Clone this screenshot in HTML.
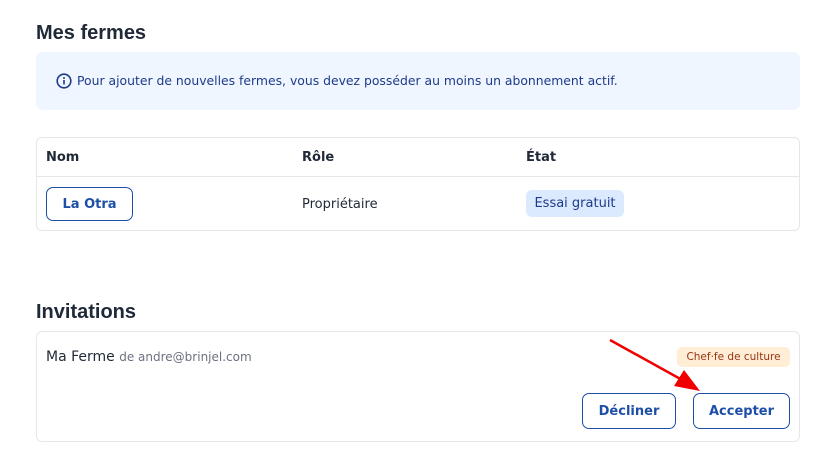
<!DOCTYPE html>
<html><head><meta charset="utf-8"><style>
*{box-sizing:border-box;margin:0;padding:0}
body{width:831px;height:471px;background:#fff;font-family:"DejaVu Sans","Liberation Sans",sans-serif;color:#1f2937;position:relative;overflow:hidden}
.a{position:absolute}
h2{position:absolute;font-size:20px;color:#1f2937;font-family:"Liberation Sans",sans-serif;font-weight:bold}
.info{left:36px;top:52px;width:764px;height:58px;background:#eff6ff;border-radius:7px}
.card{border:1px solid #e5e7eb;border-radius:6px}
.th{font-size:13px;font-weight:bold;color:#1f2937}
.td{font-size:13px;color:#1f2937}
.btn{border:1.5px solid #1e4fa8;border-radius:7px;color:#1e4fa8;font-weight:bold;font-size:13px;display:flex;align-items:center;justify-content:center;background:#fff}
</style></head><body>
<h2 style="left:36px;top:22px">Mes fermes</h2>
<div class="a info"></div>
<svg class="a" style="left:56px;top:73px" width="16" height="16" viewBox="0 0 16 16"><circle cx="8" cy="8" r="6.8" fill="none" stroke="#1e3a8a" stroke-width="1.6"/><rect x="7.2" y="7" width="1.6" height="4.5" fill="#1e3a8a"/><circle cx="8" cy="5" r="1" fill="#1e3a8a"/></svg>
<div class="a" style="left:77px;top:73px;font-size:12.4px;color:#1e3a8a">Pour ajouter de nouvelles fermes, vous devez posséder au moins un abonnement actif.</div>
<div class="a card" style="left:36px;top:137px;width:764px;height:94px"></div>
<div class="a" style="left:37px;top:176px;width:762px;height:1px;background:#e5e7eb"></div>
<div class="a th" style="left:46px;top:150px">Nom</div>
<div class="a th" style="left:302px;top:150px">Rôle</div>
<div class="a th" style="left:526px;top:150px">État</div>
<div class="a btn" style="left:46px;top:187px;width:87px;height:34px">La Otra</div>
<div class="a td" style="left:302px;top:197px">Propriétaire</div>
<div class="a" style="left:526px;top:190px;width:98px;height:27px;background:#dbeafe;border-radius:6px;color:#1e3a8a;font-size:13px;display:flex;align-items:center;justify-content:center">Essai gratuit</div>
<h2 style="left:36px;top:301px">Invitations</h2>
<div class="a card" style="left:36px;top:331px;width:764px;height:111px"></div>
<div class="a" style="left:46px;top:349px;font-size:14px;color:#1f2937">Ma Ferme <span style="font-size:12px;color:#6b7280">de andre@brinjel.com</span></div>
<div class="a" style="left:677px;top:347px;width:113px;height:20px;background:#ffedd5;border-radius:5px;color:#9a3412;font-size:10.5px;display:flex;align-items:center;justify-content:center">Chef·fe de culture</div>
<div class="a btn" style="left:582px;top:393px;width:94px;height:36px">Décliner</div>
<div class="a btn" style="left:693px;top:393px;width:97px;height:36px">Accepter</div>
<svg class="a" style="left:0;top:0" width="831" height="471"><line x1="610" y1="340" x2="684" y2="381" stroke="#f00000" stroke-width="2.5"/><polygon points="700,391 674,386 684,370" fill="#f00000"/></svg>
</body></html>
